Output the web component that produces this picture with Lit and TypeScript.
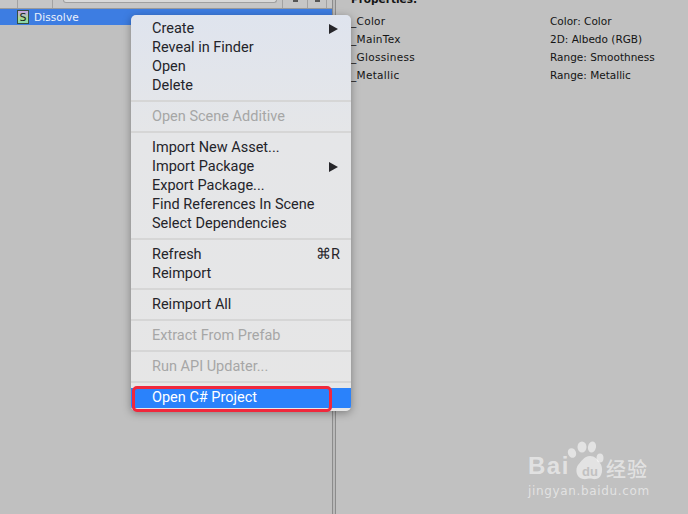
import { LitElement, html, css, nothing } from 'lit';
import { customElement } from 'lit/decorators.js';

type MenuEntry =
    | { sep: true }
    | {
          label: string;
          disabled?: boolean;
          arrow?: boolean;
          shortcut?: string;
          active?: boolean;
      };

const MENU: MenuEntry[] = [
    { label: 'Create', arrow: true },
    { label: 'Reveal in Finder' },
    { label: 'Open' },
    { label: 'Delete' },
    { sep: true },
    { label: 'Open Scene Additive', disabled: true },
    { sep: true },
    { label: 'Import New Asset...' },
    { label: 'Import Package', arrow: true },
    { label: 'Export Package...' },
    { label: 'Find References In Scene' },
    { label: 'Select Dependencies' },
    { sep: true },
    { label: 'Refresh', shortcut: '⌘R' },
    { label: 'Reimport' },
    { sep: true },
    { label: 'Reimport All' },
    { sep: true },
    { label: 'Extract From Prefab', disabled: true },
    { sep: true },
    { label: 'Run API Updater...', disabled: true },
    { sep: true },
    { label: 'Open C# Project', active: true },
];

const PROPS = [
    ['_Color', 'Color: Color'],
    ['_MainTex', '2D: Albedo (RGB)'],
    ['_Glossiness', 'Range: Smoothness'],
    ['_Metallic', 'Range: Metallic'],
];

@customElement('app-root')
export class AppRoot extends LitElement {
    static styles = css`
        :host {
            display: grid;
            grid-template-columns: 332px 4px 1fr;
            position: relative;
            width: 688px;
            height: 514px;
            overflow: hidden;
            background: #c1c1c1;
            font-family: 'DejaVu Sans', sans-serif;
            color: #141414;
        }

        .left {
            display: flex;
            flex-direction: column;
            background: #c0c0c0;
        }

        .toolbar {
            position: relative;
            height: 8px;
            border-bottom: 1px solid #9a9a9a;
            background: #c6c6c6;
            display: flex;
        }

        .seg {
            border-right: 1px solid #a2a2a2;
            flex: none;
            display: flex;
            justify-content: center;
        }

        .seg i {
            width: 5px;
            height: 2px;
            background: #555;
        }

        .search {
            flex: none;
            width: 214px;
            height: 3px;
            margin: 0 5px 0 10px;
            box-sizing: border-box;
            border: 1px solid #a0a0a0;
            border-top: none;
            border-radius: 0 0 6px 6px;
            background: #dadada;
        }

        .row {
            height: 16px;
            display: flex;
            align-items: center;
            background: #3d7de2;
            color: #eef3fb;
            font-size: 10.5px;
            letter-spacing: 0.1px;
            padding-left: 17px;
        }

        .s-icon {
            width: 10px;
            height: 12px;
            margin-right: 5px;
            border: 1px solid #35503f;
            background: linear-gradient(#c8a0e6, #a8dc8c 65%, #86d6b0);
            color: #15251a;
            font-size: 11px;
            line-height: 13px;
            text-align: center;
            letter-spacing: 0;
            flex: none;
        }

        .divider {
            background: #b9b9b9;
            border-left: 1px solid #8c8c8c;
            border-right: 1px solid #8c8c8c;
        }

        .right {
            padding-left: 15px;
            font-size: 10.5px;
        }

        .heading {
            font-weight: bold;
            line-height: 10px;
            margin-top: -6px;
            margin-bottom: 8px;
        }

        .prop {
            display: grid;
            grid-template-columns: 199px 1fr;
            height: 18px;
            line-height: 18px;
        }

        .prop .name {
            letter-spacing: 0.3px;
        }

        .menu {
            position: absolute;
            left: 131px;
            top: 15px;
            width: 220px;
            box-sizing: border-box;
            padding-top: 4px;
            height: 396px;
            border-radius: 5px;
            overflow: hidden;
            background: linear-gradient(#dfe4ee, #e5e6e8 30%, #e6e6e6);
            box-shadow: 0 2px 9px rgba(0, 0, 0, 0.35);
            font-family: Roboto, 'Liberation Sans', sans-serif;
            font-size: 14.5px;
            color: #24242a;
        }

        .item {
            display: flex;
            align-items: center;
            justify-content: space-between;
            height: 19px;
            padding: 0 13px 0 21px;
        }

        .item.disabled {
            color: #a6a6a6;
        }

        .item.active {
            height: 20px;
            padding-bottom: 2px;
            box-sizing: border-box;
            background: #2a82fb;
            color: #fff;
        }

        .sep {
            height: 12px;
            display: flex;
            align-items: center;
        }

        .sep::before {
            content: '';
            flex: 1;
            height: 2px;
            background: #d6d6d6;
        }

        .arrow {
            width: 0;
            height: 0;
            border-left: 9px solid #26262a;
            border-top: 5px solid transparent;
            border-bottom: 5px solid transparent;
        }

        .shortcut {
            margin-right: -2px;
        }

        .highlight {
            position: absolute;
            left: 132px;
            top: 386px;
            width: 194px;
            height: 20px;
            border: 3px solid #f0283c;
            border-radius: 5px;
        }

        .mark {
            position: absolute;
            left: 528px;
            top: 441px;
            width: 125px;
            height: 58px;
            color: rgba(255, 255, 255, 0.55);
            font-family: 'Liberation Sans', sans-serif;
        }

        .mark svg {
            position: absolute;
            left: 36px;
            top: 0;
        }

        .bai {
            position: absolute;
            left: 0;
            top: 10px;
            font-size: 24px;
            line-height: 30px;
            font-weight: bold;
            letter-spacing: 1.5px;
        }

        .du {
            position: absolute;
            left: 54px;
            top: 24px;
            font-size: 13px;
            line-height: 14px;
            font-weight: bold;
            color: #c1c1c1;
        }

        .jy {
            position: absolute;
            left: 78px;
            top: 16px;
            font-family: 'Noto Sans CJK SC', sans-serif;
            font-size: 20px;
            line-height: 24px;
            font-weight: 500;
            letter-spacing: 1px;
        }

        .url {
            position: absolute;
            left: 0;
            top: 43px;
            font-family: 'DejaVu Sans', sans-serif;
            font-size: 12px;
            line-height: 14px;
            letter-spacing: 0.65px;
        }
    `;

    renderEntry(entry: MenuEntry) {
        if ('sep' in entry) return html`<div class="sep"></div>`;
        const cls = entry.disabled ? 'disabled' : entry.active ? 'active' : '';
        return html`
            <div class="item ${cls}">
                <span>${entry.label}</span>
                ${entry.arrow ? html`<span class="arrow"></span>` : nothing}
                ${entry.shortcut
                    ? html`<span class="shortcut">${entry.shortcut}</span>`
                    : nothing}
            </div>
        `;
    }

    render() {
        return html`
            <div class="left">
                <div class="toolbar">
                    <div class="seg" style="width:17px"></div>
                    <div class="seg" style="width:34px"></div>
                    <div class="search"></div>
                    <div class="seg" style="width:0"></div>
                    <div class="seg" style="width:24px"><i></i></div>
                    <div class="seg" style="width:18px"><i></i></div>
                </div>
                <div class="row"><span class="s-icon">S</span>Dissolve</div>
            </div>
            <div class="divider"></div>
            <div class="right">
                <div class="heading">Properties:</div>
                ${PROPS.map(
                    ([name, type]) => html`
                        <div class="prop">
                            <span class="name">${name}</span><span>${type}</span>
                        </div>
                    `
                )}
            </div>
            <div class="menu">${MENU.map((e) => this.renderEntry(e))}</div>
            <div class="highlight"></div>
            <div class="mark">
                <svg width="44" height="42" viewBox="0 0 44 42" fill="currentColor">
                    <ellipse cx="8" cy="12" rx="4" ry="5" transform="rotate(-25 8 12)" />
                    <ellipse cx="18" cy="6" rx="4.5" ry="5.5" />
                    <ellipse cx="28" cy="6" rx="4" ry="5.5" transform="rotate(12 28 6)" />
                    <ellipse cx="36" cy="17" rx="3.5" ry="4.5" />
                    <path
                        d="M26 15c5 0 7 3 10 7 3.500 4 3 15-4 16-3 .5-4-.5-6-.5s-4 1-7 .5c-7-1-8-10-5-14 3-3 6-9 12-9z"
                    />
                </svg>
                <span class="bai">Bai</span>
                <span class="du">du</span>
                <span class="jy">经验</span>
                <span class="url">jingyan.baidu.com</span>
            </div>
        `;
    }
}
